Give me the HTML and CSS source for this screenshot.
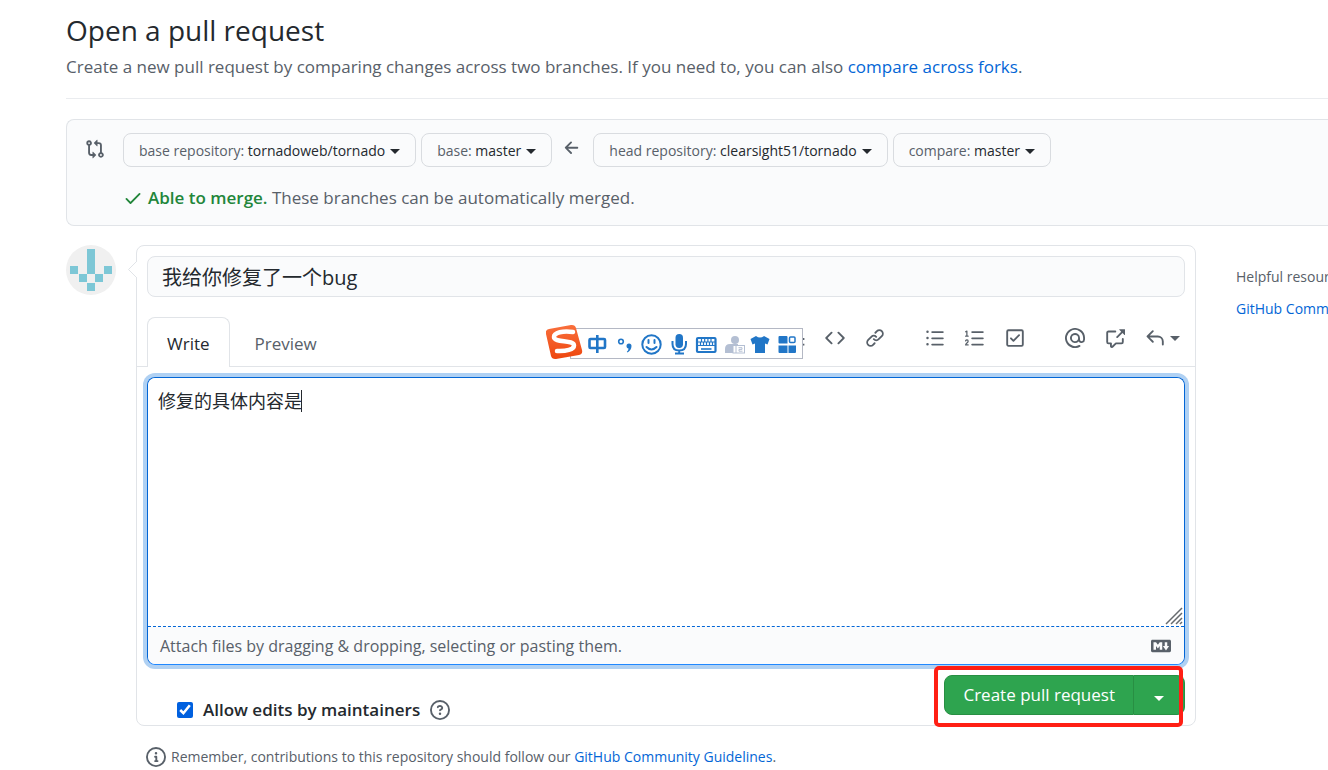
FILE: index.html
```html
<!DOCTYPE html>
<html lang="en">
<head>
<meta charset="utf-8">
<title>Open a pull request</title>
<link rel="stylesheet" href="styles.css">
</head>
<body>
<main class="page">
  <header class="subhead">
    <h1 class="subhead-title">Open a pull request</h1>
    <p class="subhead-text">Create a new pull request by comparing changes across two branches. If you need to, you can also <a href="#forks">compare across forks</a>.</p>
  </header>

  <section class="range">
    <svg class="icon range-icon" viewBox="0 0 16 16" aria-hidden="true"><path fill-rule="evenodd" d="M9.573.677L7.177 3.073a.25.25 0 000 .354l2.396 2.396A.25.25 0 0010 5.646V4h1a1 1 0 011 1v5.628a2.251 2.251 0 101.5 0V5A2.5 2.5 0 0011 2.5h-1V.854a.25.25 0 00-.427-.177zM12 12.75a.75.75 0 111.5 0 .75.75 0 01-1.5 0zM3.25 2.5a.75.75 0 100 1.5.75.75 0 000-1.5zM1 3.25a2.25 2.25 0 113 2.122V11a1 1 0 001 1h1v-1.646a.25.25 0 01.427-.177l2.396 2.396a.25.25 0 010 .354l-2.396 2.396A.25.25 0 016 15.146V13.5H5A2.5 2.5 0 012.5 11V5.372A2.25 2.25 0 011 3.25z"/></svg>
    <div class="range-body">
      <div class="range-row">
        <button class="select-btn" type="button">base repository: <b>tornadoweb/tornado</b><i class="caret"></i></button>
        <button class="select-btn" type="button">base: <b>master</b><i class="caret"></i></button>
        <svg class="icon range-arrow" viewBox="0 0 16 16" aria-hidden="true"><path d="M7.78 12.53a.75.75 0 01-1.06 0L2.47 8.28a.75.75 0 010-1.06l4.25-4.25a.75.75 0 011.06 1.06L4.81 7h7.44a.75.75 0 010 1.5H4.81l2.97 2.97a.75.75 0 010 1.06z"/></svg>
        <button class="select-btn" type="button">head repository: <b>clearsight51/tornado</b><i class="caret"></i></button>
        <button class="select-btn" type="button">compare: <b>master</b><i class="caret"></i></button>
      </div>
      <p class="merge"><svg class="icon merge-icon" viewBox="0 0 16 16" aria-hidden="true"><path d="M13.78 4.22a.75.75 0 010 1.06l-7.25 7.25a.75.75 0 01-1.06 0L2.22 9.28a.75.75 0 011.06-1.06L6 10.94l6.72-6.72a.75.75 0 011.06 0z"/></svg><span><strong class="merge-ok">Able to merge.</strong> These branches can be automatically merged.</span></p>
    </div>
  </section>

  <div class="columns">
    <svg class="avatar" viewBox="0 0 50 50" role="img" aria-label="Avatar"><circle cx="25" cy="25" r="25" fill="#f0f0f0"/><path fill="#7dc7d6" d="M21 4h8v25h-8zM4 21h8v8H4zM38 21h8v8h-8zM13 29h8v8h-8zM29 29h8v8h-8zM21 38h8v8h-8z"/></svg>

    <div class="main">
      <form class="compose">
        <svg class="compose-arrow" viewBox="0 0 9 17" aria-hidden="true"><path d="M9 0L.5 8.500 9 17" fill="#fff" stroke="#e1e4e8"/></svg>
        <input class="title-input" type="text" aria-label="Title" value="我给你修复了一个bug">
        <div class="tabs">
          <button class="tab tab-active" type="button">Write</button>
          <button class="tab" type="button">Preview</button>
          <div class="toolbar">
            <div class="tool-group">
              <button class="tool" type="button" aria-label="Quote"><svg class="icon" viewBox="0 0 16 16"><path d="M2 2.500h10.500V4H2zM5 8h10.500v1.500H5zM5 12.500h10.500V14H5z"/></svg></button>
              <button class="tool" type="button" aria-label="Code"><svg class="icon" viewBox="0 0 16 16"><path d="M4.720 3.220a.75.75 0 011.060 1.060L2.060 8l3.720 3.720a.75.75 0 11-1.060 1.060L.47 8.530a.75.75 0 010-1.060l4.250-4.250zm6.560 0a.75.75 0 10-1.060 1.060L13.940 8l-3.720 3.720a.75.75 0 101.060 1.060l4.250-4.250a.75.75 0 000-1.060l-4.250-4.250z"/></svg></button>
              <button class="tool" type="button" aria-label="Link"><svg class="icon" viewBox="0 0 16 16"><path d="M7.775 3.275a.75.75 0 001.060 1.060l1.250-1.250a2 2 0 112.830 2.830l-2.500 2.500a2 2 0 01-2.830 0 .75.75 0 00-1.060 1.060 3.500 3.500 0 004.950 0l2.500-2.500a3.500 3.500 0 00-4.950-4.950l-1.250 1.250zm-4.690 9.640a2 2 0 010-2.830l2.500-2.500a2 2 0 012.830 0 .75.75 0 001.060-1.060 3.500 3.500 0 00-4.950 0l-2.500 2.500a3.500 3.500 0 004.950 4.950l1.250-1.250a.75.75 0 00-1.060-1.060l-1.250 1.250a2 2 0 01-2.830 0z"/></svg></button>
            </div>
            <div class="tool-group">
              <button class="tool" type="button" aria-label="Bulleted list"><svg class="icon" viewBox="0 0 16 16"><path d="M2 4a1 1 0 100-2 1 1 0 000 2zm3.750-1.500a.75.75 0 000 1.500h8.500a.75.75 0 000-1.500h-8.500zm0 5a.75.75 0 000 1.500h8.500a.75.75 0 000-1.500h-8.500zm0 5a.75.75 0 000 1.500h8.500a.75.75 0 000-1.500h-8.500zM3 8a1 1 0 11-2 0 1 1 0 012 0zm-1 6a1 1 0 100-2 1 1 0 000 2z"/></svg></button>
              <button class="tool" type="button" aria-label="Numbered list"><svg class="icon" viewBox="0 0 16 16"><path d="M5.750 2.500h8.500a.75.75 0 010 1.500h-8.500a.75.75 0 010-1.500zm0 5h8.500a.75.75 0 010 1.500h-8.500a.75.75 0 010-1.500zm0 5h8.500a.75.75 0 010 1.500h-8.500a.75.75 0 010-1.500z"/><path fill="none" stroke="currentColor" stroke-linecap="round" stroke-linejoin="round" d="M.5 3l1-.5v4M.5 6.500h2M.5 10.300c.5-1.100 2-1 2 .2 0 1.400-2 1.500-2 3h2"/></svg></button>
              <button class="tool" type="button" aria-label="Task list"><svg class="icon" viewBox="0 0 16 16"><path fill-rule="evenodd" d="M2.500 2.750a.25.25 0 01.25-.25h10.500a.25.25 0 01.25.25v10.500a.25.25 0 01-.25.25H2.750a.25.25 0 01-.25-.25V2.750zM2.750 1A1.750 1.750 0 001 2.750v10.500c0 .966.784 1.750 1.750 1.750h10.500A1.750 1.750 0 0015 13.250V2.750A1.750 1.750 0 0013.250 1H2.750zm9.030 5.280a.75.75 0 00-1.060-1.060L6.750 9.190 5.280 7.720a.75.75 0 00-1.060 1.060l2 2a.75.75 0 001.060 0l4.500-4.500z"/></svg></button>
            </div>
            <div class="tool-group">
              <button class="tool" type="button" aria-label="Mention"><svg class="icon" viewBox="0 0 16 16"><path fill-rule="evenodd" d="M4.750 2.370a6.500 6.500 0 006.500 11.260.75.75 0 01.75 1.298 8 8 0 113.994-7.273.754.754 0 01.006.095v1.500a2.750 2.750 0 01-5.072 1.475A4 4 0 1112 8v1.250a1.250 1.250 0 002.500 0V7.867a6.500 6.500 0 00-9.750-5.496V2.370zM10.500 8a2.500 2.500 0 10-5 0 2.500 2.500 0 005 0z"/></svg></button>
              <button class="tool" type="button" aria-label="Reference"><svg class="icon" viewBox="0 0 16 16"><path d="M16 1.250v4.146a.25.25 0 01-.427.177L14.030 4.030l-3.750 3.750a.75.75 0 11-1.060-1.060l3.750-3.750-1.543-1.543A.25.25 0 0111.604 1h4.146a.25.25 0 01.25.25zM2.750 3.500a.25.25 0 00-.25.25v7.500c0 .138.112.25.25.25h2a.75.75 0 01.75.75v2.190l2.720-2.720a.75.75 0 01.53-.22h4.500a.25.25 0 00.25-.25v-2.500a.75.75 0 111.500 0v2.500A1.750 1.750 0 0113.250 13H9.060l-2.573 2.573A1.457 1.457 0 014 14.543V13H2.750A1.750 1.750 0 011 11.250v-7.500C1 2.784 1.784 2 2.750 2h5.500a.75.75 0 010 1.500h-5.500z"/></svg></button>
              <button class="tool tool-reply" type="button" aria-label="Saved replies"><svg class="icon" viewBox="0 0 16 16"><path d="M6.780 1.970a.75.75 0 010 1.060L3.810 6h6.440A4.750 4.750 0 0115 10.750v2.500a.75.75 0 01-1.500 0v-2.500a3.250 3.250 0 00-3.250-3.250H3.810l2.970 2.970a.75.75 0 11-1.060 1.060L1.470 7.280a.75.75 0 010-1.060l4.250-4.250a.75.75 0 011.060 0z"/></svg><i class="caret"></i></button>
            </div>
          </div>
          <svg class="ime" viewBox="0 0 258 36" role="img" aria-label="Input method bar">
            <defs><linearGradient id="ime-logo" x1="0" y1="0" x2="0" y2="1"><stop offset="0" stop-color="#f96f3c"/><stop offset="1" stop-color="#ee470f"/></linearGradient></defs>
            <rect x="24.500" y="4.500" width="232" height="30" fill="#fff" stroke="#b4b8c4"/>
            <path fill="url(#ime-logo)" d="M3 5L25 1q4-.5 5 3l6 22q1 4-3 5L10 35q-4 .5-5-3L0 10q-1-4 3-5z"/>
            <path fill="none" stroke="#fff" stroke-width="4.500" stroke-linecap="round" d="M27 8C17 6.500 8 8.500 8 13c0 6 20 2.500 20 8.500 0 4-8 6-17 5.500"/>
            <rect x="43.500" y="15" width="15.500" height="9" rx="1" fill="none" stroke="#2176c7" stroke-width="2.600"/><path fill="none" stroke="#2176c7" stroke-width="2.600" d="M51.300 11v18"/>
            <circle cx="75" cy="17.500" r="2.300" fill="none" stroke="#2176c7" stroke-width="1.600"/>
            <path fill="#2176c7" d="M80.500 22a2.500 2.500 0 015 0c0 3-1.500 5-4 6.500l-.7-.8c1.200-1 1.700-2 1.700-3.200-1.200-.2-2-1.200-2-2.500z"/>
            <circle cx="105.500" cy="20.500" r="9.200" fill="none" stroke="#2176c7" stroke-width="2"/>
            <path fill="none" stroke="#2176c7" stroke-width="2" stroke-linecap="round" d="M102.500 16v3M108.500 16v3M100.500 23q5 5 10 0"/>
            <rect x="129.500" y="10" width="7.500" height="14" rx="3.700" fill="#2176c7"/>
            <path fill="none" stroke="#2176c7" stroke-width="2" d="M126.500 17v3q0 6.500 6.700 6.500T140 20v-3M133.200 26v3.500M129 29.500h9"/>
            <rect x="151" y="14" width="18.500" height="14" rx="1" fill="#fff" stroke="#2176c7" stroke-width="2.200"/>
            <path fill="none" stroke="#2176c7" stroke-width="1.200" d="M152 18h17M152 21.500h17M155.500 15v3M158.700 15v3M161.900 15v3M165 15v3M154.500 18v3.500M157.500 18v3.500M160.500 18v3.500M163.500 18v3.500M166.500 18v3.500"/>
            <path stroke="#2176c7" stroke-width="1.600" d="M155 25h10.500"/>
            <circle cx="189" cy="16" r="4" fill="#b4bfd3"/><path fill="#b4bfd3" d="M179 29v-4q0-5 5-5h8v9z"/>
            <rect x="187" y="21.500" width="11.500" height="7.500" fill="#fff" stroke="#b4bfd3"/><path fill="none" stroke="#b4bfd3" d="M190 22v7M192.500 23.700h3.500v1.700h-3v1.800h3.500"/>
            <path fill="#2176c7" d="M210 12q4 3 8 0l5.500 3-2 5.500-2.500-1V29h-10v-9.500l-2.500 1-2-5.500z"/>
            <path fill="#2176c7" d="M233.500 12h7q1 0 1 1v6.500h-8q-1 0-1-1V13q0-1 1-1zM232.500 21.500h9V29h-8q-1 0-1-1zM242.500 21.500h7.500V28q0 1-1 1h-6.500z"/>
            <rect x="243.500" y="13" width="5.500" height="5.500" rx="1" fill="#fff" stroke="#2176c7" stroke-width="1.500"/>
          </svg>
        </div>

        <div class="editor">
          <textarea class="editor-text" aria-label="Description">修复的具体内容是</textarea>
          <span class="text-caret"></span>
          <svg class="grip" viewBox="0 0 18 18" aria-hidden="true"><path d="M1 17L17 1M6 17L17 6M11 17l6-6M15 17l2-2" stroke="#666a6e" stroke-width="1.500"/></svg>
          <div class="editor-foot">
            <span>Attach files by dragging &amp; dropping, selecting or pasting them.</span>
            <svg class="icon" viewBox="0 0 16 16" role="img" aria-label="Markdown supported"><path fill-rule="evenodd" d="M14.850 3H1.150C.52 3 0 3.520 0 4.150v7.690C0 12.480.52 13 1.150 13h13.690c.64 0 1.150-.52 1.150-1.150v-7.700C16 3.520 15.480 3 14.850 3zM9 11H7V8L5.500 9.920 4 8v3H2V5h2l1.500 2L7 5h2v6zm2.990.5L9.500 8H11V5h2v3h1.500l-2.510 3.500z"/></svg>
          </div>
        </div>

        <div class="actions">
          <div class="allow">
            <input class="allow-box" type="checkbox" id="allow" checked>
            <label for="allow">Allow edits by maintainers</label>
            <svg class="icon" viewBox="0 0 16 16" role="img" aria-label="Help"><path fill-rule="evenodd" d="M8 1.500a6.500 6.500 0 100 13 6.500 6.500 0 000-13zM0 8a8 8 0 1116 0A8 8 0 010 8zm9 3a1 1 0 11-2 0 1 1 0 012 0zM6.920 6.085c.081-.16.19-.299.34-.398.145-.097.371-.187.74-.187.28 0 .553.087.738.225A.613.613 0 019 6.250c0 .177-.04.264-.077.318a.956.956 0 01-.277.245c-.076.051-.158.1-.258.161l-.007.004a7.728 7.728 0 00-.313.195 2.416 2.416 0 00-.692.661.75.75 0 001.248.832.956.956 0 01.276-.245 6.300 6.300 0 01.26-.16l.006-.004c.093-.057.204-.123.313-.195.222-.149.487-.355.692-.662.214-.32.329-.702.329-1.150 0-.76-.36-1.348-.863-1.725A2.760 2.760 0 008 4c-.631 0-1.155.16-1.572.438-.413.276-.68.638-.849.977a.75.75 0 101.342.67z"/></svg>
          </div>
          <div class="submit">
            <button class="submit-main" type="submit">Create pull request</button>
            <button class="submit-more" type="button" aria-label="More options"><i class="caret"></i></button>
            <span class="highlight"></span>
          </div>
        </div>
      </form>
      <p class="note"><svg class="icon" viewBox="0 0 16 16" aria-hidden="true"><path fill-rule="evenodd" d="M8 1.500a6.500 6.500 0 100 13 6.500 6.500 0 000-13zM0 8a8 8 0 1116 0A8 8 0 010 8zm6.500-.25A.75.75 0 017.250 7h1a.75.75 0 01.75.75v2.750h.25a.75.75 0 010 1.500h-2a.75.75 0 010-1.500h.25v-2h-.25a.75.75 0 01-.75-.75zM8 6a1 1 0 100-2 1 1 0 000 2z"/></svg><span>Remember, contributions to this repository should follow our <a href="#guidelines">GitHub Community Guidelines</a>.</span></p>
    </div>

    <aside class="side">
      <h2 class="side-title">Helpful resources</h2>
      <a href="#guidelines">GitHub Community Guidelines</a>
    </aside>
  </div>
</main>
</body>
</html>
```
FILE: styles.css
```css
* { box-sizing: border-box; }

body {
  margin: 0;
  background: #fff;
  color: #24292e;
  font: 17px/26px "Open Sans", "Noto Sans", "Noto Sans CJK SC", sans-serif;
  overflow-x: hidden;
}

button, input, textarea { font: inherit; color: inherit; margin: 0; }
h1, h2, p { margin: 0; }
a { color: #0366d6; text-decoration: none; }

.page { padding: 8px 0 0 66px; }

.icon { width: 20px; height: 20px; flex: none; fill: currentColor; color: #586069; display: block; }

.caret {
  display: inline-block;
  flex: none;
  border: 5px solid transparent;
  border-top-color: currentColor;
  border-bottom: 0;
}

/* Heading */
.subhead { border-bottom: 1px solid #eaecef; padding-bottom: 18px; }
.subhead-title { margin-bottom: 2px; font-size: 28px; line-height: 44px; font-weight: 400; }
.subhead-text { color: #586069; white-space: nowrap; }

/* Branch range */
.range {
  display: flex;
  margin-top: 20px;
  padding: 13px 0 14px 18px;
  border: 1px solid #e1e4e8;
  border-right: 0;
  border-radius: 8px 0 0 8px;
  background: #fafbfc;
}
.range-icon { margin: 6px 18px 0 0; }
.range-row { display: flex; gap: 5px; }
.range-arrow { margin: 5px 6px 0 5px; }
.select-btn {
  display: flex;
  align-items: center;
  height: 34px;
  padding: 2px 15px 0;
  border: 1px solid #d9dce0;
  border-radius: 8px;
  background: #fafbfc;
  color: #586069;
  font-size: 14px;
  white-space: pre;
}
.select-btn b { font-weight: 400; color: #24292e; margin-right: 5px; }
.select-btn .caret { color: #24292e; }
.merge { display: flex; align-items: center; gap: 5px; margin-top: 18px; color: #586069; }
.merge-icon, .merge-ok { color: #22863a; }
.merge-ok { font-weight: 600; }

/* Columns */
.columns { display: grid; grid-template-columns: 50px minmax(0, 1fr) 92px; margin-top: 19px; }
.avatar { width: 50px; height: 50px; }
.main { padding: 0 40px 0 20px; }

.compose { position: relative; border: 1px solid #e1e4e8; border-radius: 8px; }
.compose-arrow { position: absolute; left: -9px; top: 15px; width: 9px; height: 17px; }
.title-input {
  display: block;
  width: calc(100% - 20px);
  height: 41px;
  margin: 10px 10px 20px;
  padding: 0 14px;
  border: 1px solid #e1e4e8;
  border-radius: 8px;
  background: #fafbfc;
  font-size: 20px;
}

/* Tabs and toolbar */
.tabs { position: relative; display: flex; height: 50px; padding-left: 10px; border-bottom: 1px solid #e1e4e8; }
.tab {
  height: 50px;
  padding: 3px 19px 0;
  border: 1px solid transparent;
  border-bottom: 0;
  border-radius: 8px 8px 0 0;
  background: none;
  color: #586069;
}
.tab-active { border-color: #e1e4e8; background: #fff; color: #24292e; margin-right: 5px; }
.toolbar { display: flex; gap: 20px; margin-left: auto; height: 42px; }
.tool-group { display: flex; }
.tool { display: flex; align-items: center; gap: 5px; padding: 0 10px; border: 0; background: none; color: #586069; }
.tool-reply { padding-right: 15px; }
.ime { position: absolute; right: 391px; top: 7px; width: 258px; height: 36px; }

/* Editor */
.editor {
  position: relative;
  margin: 10px 10px 0;
  border: 1px solid #0366d6;
  border-bottom-color: #2188ff;
  border-radius: 8px;
  box-shadow: 0 0 0 4px #b0d1f3;
}
.editor-text {
  display: block;
  width: 100%;
  height: 249px;
  padding: 10px;
  border: 0;
  border-bottom: 1px dashed #0366d6;
  border-radius: 8px 8px 0 0;
  outline: 0;
  resize: none;
  background: #fff;
  font-size: 18px;
}
.text-caret { position: absolute; left: 153px; top: 12px; width: 1px; height: 22px; background: #24292e; }
.grip { position: absolute; right: 1px; top: 229px; width: 18px; height: 18px; }
.editor-foot {
  display: flex;
  justify-content: space-between;
  align-items: center;
  height: 37px;
  padding: 0 13px 0 12px;
  border-radius: 0 0 8px 8px;
  background: #fafbfc;
  color: #586069;
  font-size: 16px;
}

/* Actions */
.actions { display: flex; justify-content: space-between; align-items: flex-start; padding: 10px 10px 0 40px; }
.allow { display: flex; align-items: center; gap: 10px; height: 30px; margin-top: 20px; font-weight: 600; }
.allow-box { width: 16px; height: 16px; accent-color: #0060df; }
.submit { position: relative; display: flex; height: 40px; color: #fff; }
.submit-main, .submit-more { border: 1px solid #288f43; background: #2ea44f; padding: 0 18px; }
.submit-main { border-radius: 8px 0 0 8px; }
.submit-more { border-left: 0; border-radius: 0 8px 8px 0; padding: 0 20px; }
.highlight {
  position: absolute;
  inset: -9px 2px -12px -10px;
  border: 4px solid #ff1f14;
  border-radius: 5px;
  pointer-events: none;
}

.note { display: flex; align-items: center; gap: 5px; margin: 18px 0 0 10px; color: #586069; font-size: 14px; }

.side { padding-top: 19px; overflow: hidden; white-space: nowrap; font-size: 14px; }
.side-title { margin-bottom: 6px; font-size: 14px; line-height: 26px; font-weight: 500; color: #586069; }
```
